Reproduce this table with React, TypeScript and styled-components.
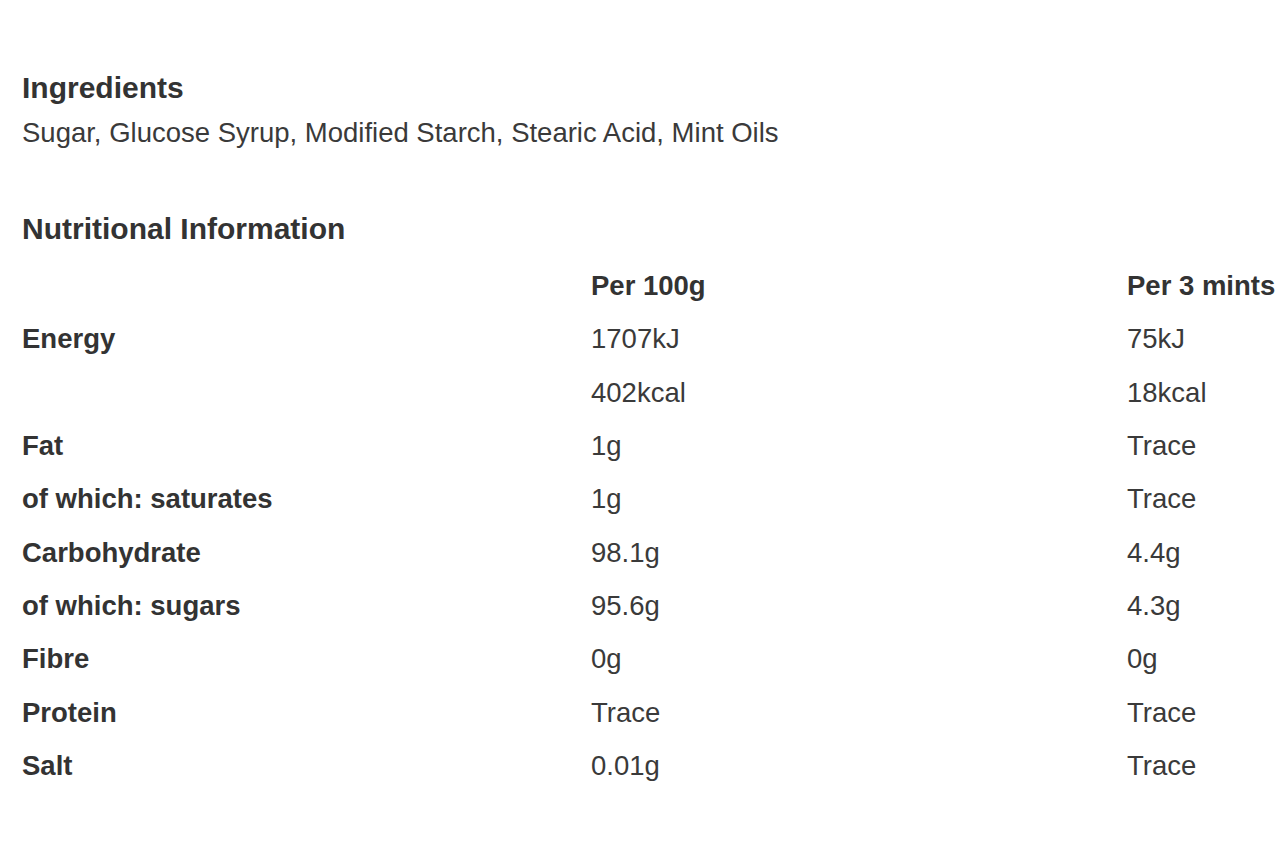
import React from "react";
import styled, { createGlobalStyle } from "styled-components";

const Global = createGlobalStyle`
  html, body {
    margin: 0;
    padding: 0;
    background: #ffffff;
    overflow: hidden;
  }
  body {
    font-family: "Liberation Sans", Arial, sans-serif;
    color: #333333;
  }
`;

const Page = styled.main`
  padding: 70px 0 0 22px;
  width: 1280px;
  box-sizing: border-box;
`;

const Section = styled.section<{ $gap?: number }>`
  display: flex;
  flex-direction: column;
  margin-bottom: ${(p) => p.$gap ?? 0}px;
`;

const Heading = styled.h2<{ $after: number }>`
  margin: 0 0 ${(p) => p.$after}px 0;
  font-size: 30px;
  line-height: 36px;
  font-weight: 700;
  color: #333333;
`;

const Paragraph = styled.p`
  margin: 0;
  font-size: 27.5px;
  line-height: 33px;
  color: #3a3a3a;
  white-space: nowrap;
`;

const Table = styled.div`
  display: grid;
  grid-template-columns: 569px 536px 1fr;
  grid-auto-rows: 53.33px;
  align-items: center;
`;

const Cell = styled.div<{ $bold?: boolean }>`
  font-size: 27.5px;
  line-height: 53.33px;
  font-weight: ${(p) => (p.$bold ? 700 : 400)};
  color: ${(p) => (p.$bold ? "#333333" : "#3a3a3a")};
  white-space: nowrap;
`;

const rows: [string, string, string][] = [
  ["Energy", "1707kJ", "75kJ"],
  ["", "402kcal", "18kcal"],
  ["Fat", "1g", "Trace"],
  ["of which: saturates", "1g", "Trace"],
  ["Carbohydrate", "98.1g", "4.4g"],
  ["of which: sugars", "95.6g", "4.3g"],
  ["Fibre", "0g", "0g"],
  ["Protein", "Trace", "Trace"],
  ["Salt", "0.01g", "Trace"],
];

export default function App() {
  return (
    <>
      <Global />
      <Page>
        <Section $gap={62}>
          <Heading $after={10}>Ingredients</Heading>
          <Paragraph>
            Sugar, Glucose Syrup, Modified Starch, Stearic Acid, Mint Oils
          </Paragraph>
        </Section>
        <Section>
          <Heading $after={12}>Nutritional Information</Heading>
          <Table>
            <Cell />
            <Cell $bold>Per 100g</Cell>
            <Cell $bold>Per 3 mints</Cell>
            {rows.map(([label, a, b], i) => (
              <React.Fragment key={i}>
                <Cell $bold>{label}</Cell>
                <Cell>{a}</Cell>
                <Cell>{b}</Cell>
              </React.Fragment>
            ))}
          </Table>
        </Section>
      </Page>
    </>
  );
}
